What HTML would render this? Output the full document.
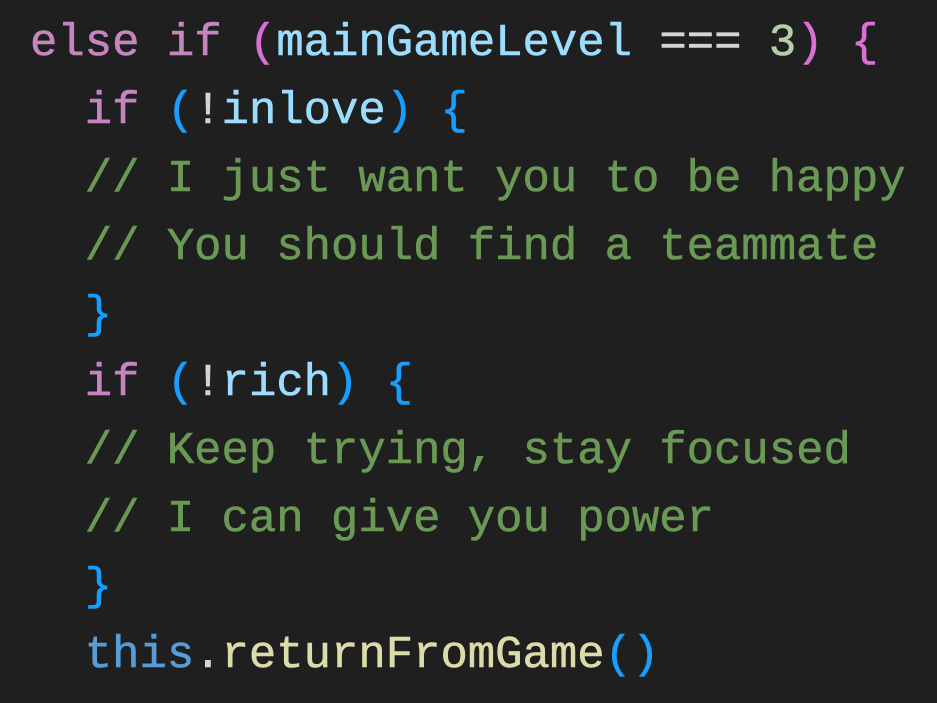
<!DOCTYPE html>
<html><head><meta charset="utf-8"><style>
html,body{margin:0;padding:0;background:#1f1f1f;width:937px;height:703px;overflow:hidden}
pre{margin:0;position:absolute;left:30px;top:9px;font-family:"Liberation Mono","DejaVu Sans Mono",monospace;font-size:45.6px;line-height:68px;color:#d4d4d4;white-space:pre;-webkit-text-stroke:0.6px currentColor}
.k{color:#c586c0}.v{color:#9cdcfe}.n{color:#b5cea8}.p{color:#da70d6}.b{color:#179fff}.c{color:#6a9955}.t{color:#569cd6}.f{color:#dcdcaa}
</style></head><body>
<pre><span class="k">else</span> <span class="k">if</span> <span class="p">(</span><span class="v">mainGameLevel</span> === <span class="n">3</span><span class="p">)</span> <span class="p">{</span>
  <span class="k">if</span> <span class="b">(</span>!<span class="v">inlove</span><span class="b">)</span> <span class="b">{</span>
  <span class="c">// I just want you to be happy</span>
  <span class="c">// You should find a teammate</span>
  <span class="b">}</span>
  <span class="k">if</span> <span class="b">(</span>!<span class="v">rich</span><span class="b">)</span> <span class="b">{</span>
  <span class="c">// Keep trying, stay focused</span>
  <span class="c">// I can give you power</span>
  <span class="b">}</span>
  <span class="t">this</span>.<span class="f">returnFromGame</span><span class="b">()</span></pre>
</body></html>
